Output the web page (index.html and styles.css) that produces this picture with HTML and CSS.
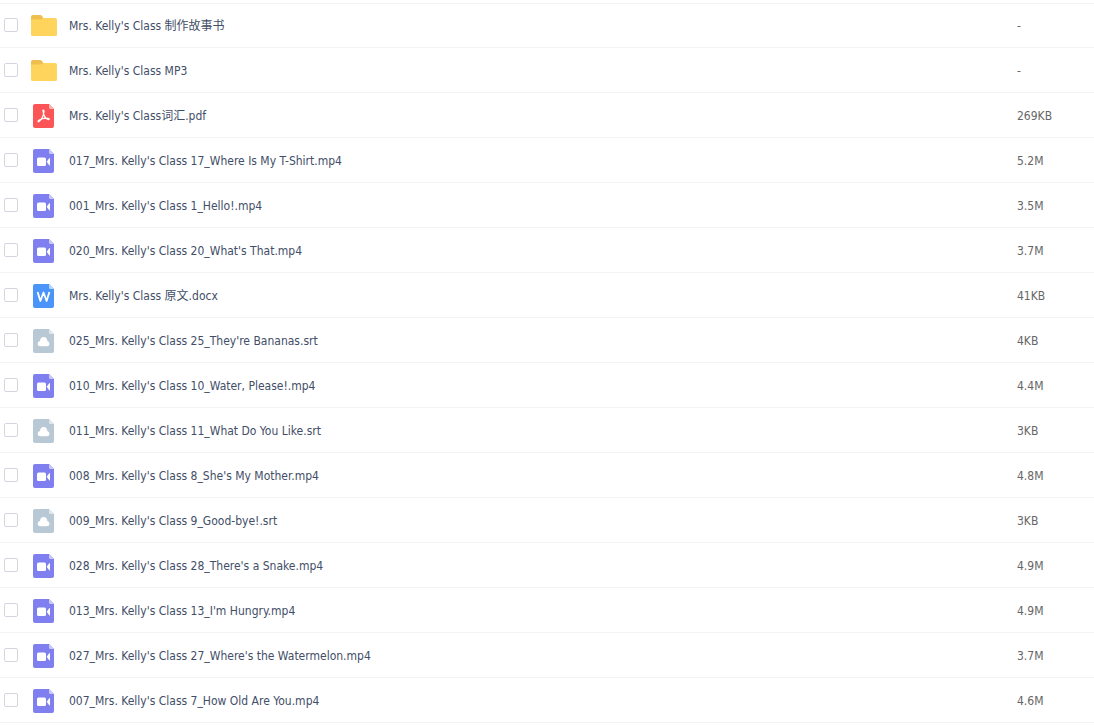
FILE: index.html
```html
<!DOCTYPE html>
<html lang="zh-CN">
<head>
<meta charset="utf-8">
<title>Files</title>
<link rel="stylesheet" href="styles.css">
</head>
<body>
<svg class="sprite" aria-hidden="true">
  <symbol id="folder" viewBox="0 0 26 22">
    <path fill="#eebf4e" d="M0 8V2Q0 0 2 0H9Q10.500 0 11.200 1.200L12.500 3.500V8Z"/>
    <path fill="#ffd45c" d="M0 5.500Q0 4.500 1 4.500H10L12.500 3H24Q26 3 26 5V19.500Q26 21 24.500 21H1.500Q0 21 0 19.500Z"/>
  </symbol>
  <symbol id="pdf" viewBox="0 0 22 24">
    <path fill="#fb5558" d="M2 0H16L21 5V22Q21 24 19 24H2Q0 24 0 22V2Q0 0 2 0Z"/>
    <path fill="#ffb5b5" d="M16 0L21 5H17.500Q16 5 16 3.500Z"/>
    <path fill="none" stroke="#fff" stroke-width="1.200" stroke-linecap="round" stroke-linejoin="round" d="M10 7.200C9.300 5.500 11.500 5.500 11 7.800C10.400 11.500 8.300 15.800 6 17.600C4.800 18.300 4.500 17 5.800 16.200C8.500 14.700 12 13.900 15 14.300C16.900 14.700 16.500 15.900 15 15.500C12.500 14.700 10.500 11 10 7.200"/>
  </symbol>
  <symbol id="video" viewBox="0 0 22 24">
    <path fill="#807ff0" d="M2 0H16L21 5V22Q21 24 19 24H2Q0 24 0 22V2Q0 0 2 0Z"/>
    <path fill="#c9c8fb" d="M16 0L21 5H17.500Q16 5 16 3.500Z"/>
    <rect x="4" y="8.500" width="9" height="8.500" rx="1.500" fill="#fff"/>
    <path fill="#fff" d="M13.700 12.700L16.200 9.200Q17 8.700 17 9.700V15.800Q17 16.700 16.200 16.200Z"/>
  </symbol>
  <symbol id="word" viewBox="0 0 22 24">
    <path fill="#4b95fa" d="M2 0H16L21 5V22Q21 24 19 24H2Q0 24 0 22V2Q0 0 2 0Z"/>
    <path fill="#b7d5fd" d="M16 0L21 5H17.500Q16 5 16 3.500Z"/>
    <path fill="none" stroke="#fff" stroke-width="1.800" stroke-linejoin="round" d="M4.600 8L7.400 17L10.500 8.500L13.600 17L16.400 8"/>
  </symbol>
  <symbol id="cloud" viewBox="0 0 22 24">
    <path fill="#b8c8d5" d="M2 0H16L21 5V22Q21 24 19 24H2Q0 24 0 22V2Q0 0 2 0Z"/>
    <path fill="#e1e8ee" d="M16 0L21 5H17.500Q16 5 16 3.500Z"/>
    <path fill="#fff" d="M7.500 17.200Q4.700 17.200 4.700 14.700Q4.700 12.500 7 12.100Q7.300 8 10.700 8Q13.900 8 14.300 11.900Q16.500 12.400 16.500 14.700Q16.500 17.200 13.800 17.200Z"/>
  </symbol>
</svg>
<table class="files"><tbody id="rows"></tbody></table>
<script src="files.js"></script>
</body>
</html>
```
FILE: styles.css
```css
body {
  margin: 0;
  padding-top: 3px;
  background: #fff;
  color: #424e67;
  font: 12px/18px "DejaVu Sans Condensed", "Noto Sans CJK SC", sans-serif;
}

.sprite {
  display: none;
}

.files {
  width: 100%;
  border-collapse: separate;
  border-spacing: 0;
  table-layout: fixed;
}

.files td {
  box-sizing: border-box;
  height: 45px;
  padding: 0;
  border-bottom: 1px solid #f2f4f8;
  vertical-align: middle;
}

.files tr:first-child td {
  box-shadow: inset 0 1px #f2f4f8;
}

.files .pick {
  width: 31px;
}

.files .size {
  width: 77px;
  padding-top: 1px;
  color: #666;
}

.check {
  display: block;
  appearance: none;
  box-sizing: border-box;
  width: 14px;
  height: 14px;
  margin: 0 0 0 4px;
  border: 1px solid #d3d6de;
  border-radius: 2px;
  background: #fff;
}

.check:checked {
  background: #4b95fa;
}

.entry {
  display: flex;
  align-items: center;
  gap: 12px;
  padding-top: 1px;
}

.slot {
  display: flex;
  justify-content: center;
  width: 26px;
}

.icon {
  width: 22px;
  height: 24px;
}

.icon-folder {
  width: 26px;
  height: 22px;
}
```
FILE: files.js
```js
const files = [
  ["folder", "Mrs. Kelly's Class 制作故事书", "-"],
  ["folder", "Mrs. Kelly's Class MP3", "-"],
  ["pdf", "Mrs. Kelly's Class词汇.pdf", "269KB"],
  ["video", "017_Mrs. Kelly's Class 17_Where Is My T-Shirt.mp4", "5.2M"],
  ["video", "001_Mrs. Kelly's Class 1_Hello!.mp4", "3.5M"],
  ["video", "020_Mrs. Kelly's Class 20_What's That.mp4", "3.7M"],
  ["word", "Mrs. Kelly's Class 原文.docx", "41KB"],
  ["cloud", "025_Mrs. Kelly's Class 25_They're Bananas.srt", "4KB"],
  ["video", "010_Mrs. Kelly's Class 10_Water, Please!.mp4", "4.4M"],
  ["cloud", "011_Mrs. Kelly's Class 11_What Do You Like.srt", "3KB"],
  ["video", "008_Mrs. Kelly's Class 8_She's My Mother.mp4", "4.8M"],
  ["cloud", "009_Mrs. Kelly's Class 9_Good-bye!.srt", "3KB"],
  ["video", "028_Mrs. Kelly's Class 28_There's a Snake.mp4", "4.9M"],
  ["video", "013_Mrs. Kelly's Class 13_I'm Hungry.mp4", "4.9M"],
  ["video", "027_Mrs. Kelly's Class 27_Where's the Watermelon.mp4", "3.7M"],
  ["video", "007_Mrs. Kelly's Class 7_How Old Are You.mp4", "4.6M"]
];

document.getElementById("rows").innerHTML = files.map(([kind, name, size], i) => `
  <tr>
    <td class="pick"><input class="check" type="checkbox" id="file-${i}"></td>
    <td><label class="entry" for="file-${i}"><span class="slot"><svg class="icon icon-${kind}" aria-hidden="true"><use href="#${kind}"/></svg></span><span>${name}</span></label></td>
    <td class="size">${size}</td>
  </tr>`).join("");
```
